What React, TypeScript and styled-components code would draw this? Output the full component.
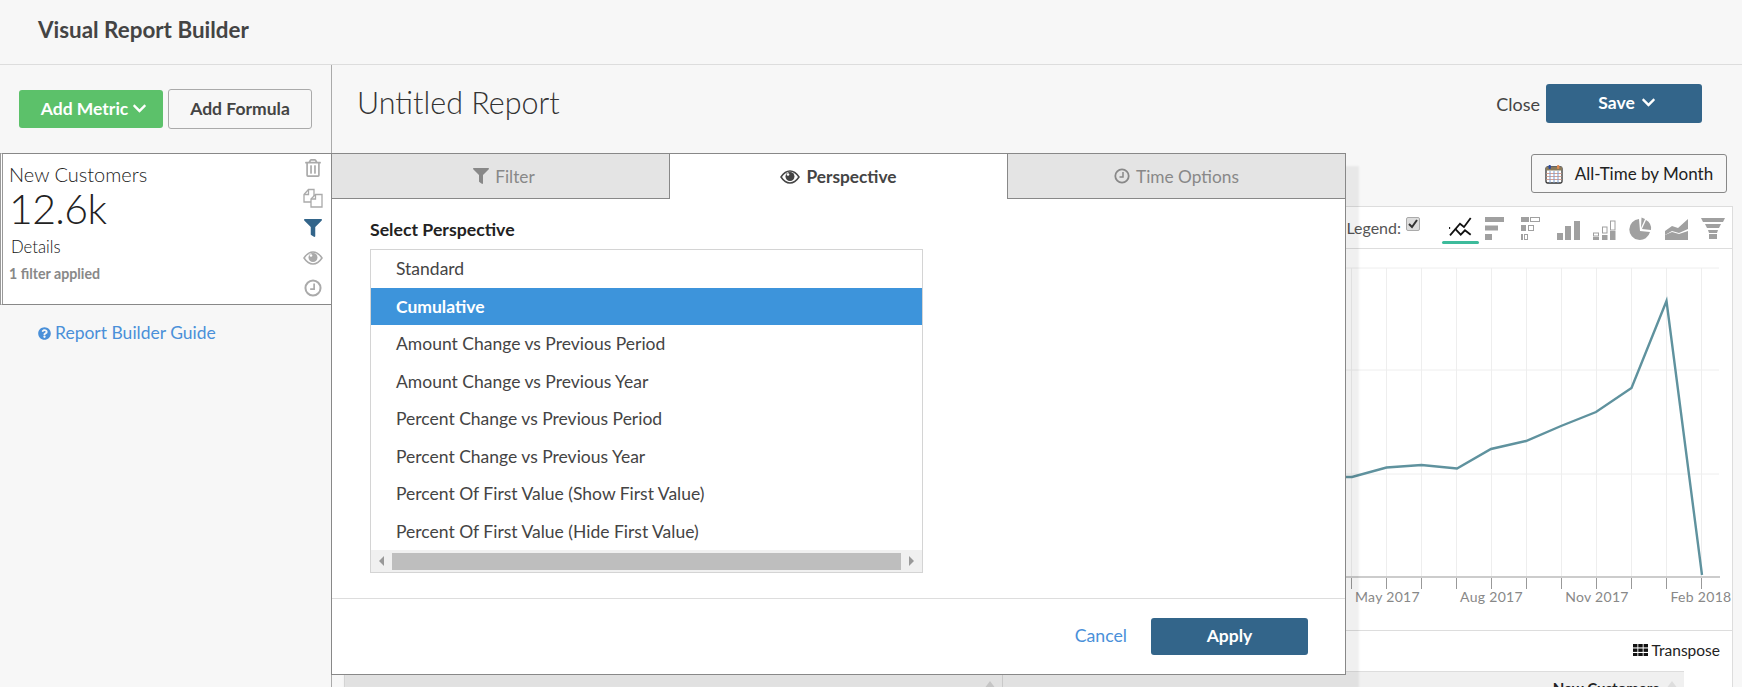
import React from 'react';
import styled, { createGlobalStyle } from 'styled-components';
import { FaChevronDown, FaFilter, FaQuestionCircle, FaRegTrashAlt } from 'react-icons/fa';

const GlobalStyle = createGlobalStyle`
  html, body {
    margin: 0;
    height: 100%;
    overflow: hidden;
    background: #f7f7f7;
    font-family: Lato, "Open Sans", sans-serif;
    color: #444;
  }
  * { box-sizing: border-box; }
`;

const Page = styled.div`
  position: relative;
  width: 1742px;
  height: 687px;
  overflow: hidden;
`;

const TopBar = styled.header`
  height: 65px;
  padding: 17px 0 0 38px;
  border-bottom: 1px solid #ddd;
  font-size: 22.4px;
  font-weight: 700;
  line-height: 26px;
  color: #444;
`;

const Body = styled.div`
  display: flex;
  height: 622px;
`;

const Sidebar = styled.aside`
  width: 332px;
  flex: none;
  border-right: 1px solid #aaa;
`;

const SidebarActions = styled.div`
  display: flex;
  gap: 5px;
  height: 88px;
  padding: 24px 0 0 19px;
  align-items: flex-start;
`;

const GreenButton = styled.button`
  width: 144px;
  height: 38px;
  margin-top: 1px;
  padding: 0 0 2px 6px;
  border: 0;
  border-radius: 3px;
  background: #5cc16a;
  color: #fff;
  font: 700 17.5px Lato, sans-serif;
  display: flex;
  align-items: center;
  justify-content: center;
  gap: 4px;
`;

const OutlineButton = styled.button`
  width: 144px;
  height: 40px;
  padding: 0 0 2px;
  border: 1px solid #aaa;
  border-radius: 3px;
  background: #f7f7f7;
  color: #444;
  font: 700 17.5px Lato, sans-serif;
`;

const MetricCard = styled.section`
  position: relative;
  display: flex;
  justify-content: space-between;
  height: 152px;
  background: #fff;
  border-top: 1px solid #888;
  border-bottom: 1px solid #888;
  border-left: 3px double #999;
`;

const MetricText = styled.div`
  padding: 8px 0 0 6px;
`;

const MetricName = styled.div`
  font-size: 20px;
  line-height: 24px;
  font-weight: 300;
  color: #222;
`;

const MetricValue = styled.div`
  font-size: 41px;
  line-height: 46px;
  font-weight: 300;
  letter-spacing: -0.6px;
  color: #222;
`;

const MetricDetails = styled.div`
  margin: 4px 0 0 2px;
  font-size: 16.7px;
  line-height: 22px;
  font-weight: 300;
  color: #111;
`;

const MetricFilters = styled.div`
  margin-top: 7px;
  font-size: 14.2px;
  line-height: 18px;
  font-weight: 700;
  color: #888;
`;

const MetricIcons = styled.div`
  display: flex;
  flex-direction: column;
  align-items: center;
  gap: 11px;
  width: 19px;
  margin: 4px 9px 0 0;
  color: #aaa;
`;

const MetricIcon = styled.span<{ $active?: boolean }>`
  display: flex;
  height: 19px;
  align-items: center;
  justify-content: center;
  font-size: 18px;
  color: ${props => (props.$active ? '#33658a' : '#aaa')};
`;

const GuideLink = styled.a`
  display: flex;
  align-items: center;
  gap: 4px;
  padding: 17px 0 0 38px;
  font-size: 17.5px;
  line-height: 22px;
  color: #4a90d9;
`;

const Main = styled.main`
  flex: 1;
  min-width: 0;
`;

const TitleRow = styled.div`
  display: flex;
  align-items: center;
  height: 39px;
  margin-top: 19px;
  padding: 0 40px 0 25px;
`;

const Title = styled.h1`
  flex: 1;
  margin: 0 0 3px;
  font-size: 30.5px;
  font-weight: 300;
  color: #333;
`;

const CloseLink = styled.a`
  margin-right: 6px;
  font-size: 18px;
  color: #444;
`;

const BlueButton = styled.button<{ $wide?: boolean }>`
  display: flex;
  align-items: center;
  justify-content: center;
  gap: 6px;
  width: ${props => (props.$wide ? '157px' : '156px')};
  height: ${props => (props.$wide ? '37px' : '39px')};
  padding: 0 0 2px ${props => (props.$wide ? '0' : '6px')};
  border: 0;
  border-radius: 3px;
  background: #33658a;
  color: #fff;
  font: 700 17.5px Lato, sans-serif;
`;

const ControlRow = styled.div`
  display: flex;
  justify-content: flex-end;
  margin-top: 31px;
  padding-right: 15px;
`;

const RangeButton = styled.button`
  display: flex;
  align-items: center;
  justify-content: center;
  gap: 12px;
  width: 196px;
  height: 39px;
  border: 1px solid #888;
  border-radius: 3px;
  background: #f7f7f7;
  color: #222;
  font: 400 17px Lato, sans-serif;
`;

const ChartCard = styled.section`
  width: 1389px;
  height: 500px;
  margin: 13px 0 0 12px;
  background: #fff;
  border: 1px solid #ddd;
  border-bottom: 0;
`;

const ChartToolbar = styled.div`
  display: flex;
  align-items: center;
  justify-content: flex-end;
  gap: 12px;
  height: 42px;
  padding-right: 7px;
  border-bottom: 1px solid #ddd;
`;

const LegendLabel = styled.label`
  display: flex;
  align-items: center;
  gap: 5px;
  margin: 0 17px 0 0;
  font-size: 16px;
  color: #555;
`;

const LegendBox = styled.span`
  display: flex;
  align-items: center;
  justify-content: center;
  width: 14px;
  height: 14px;
  margin-top: -7px;
  border: 1px solid #aaa;
  border-radius: 2px;
  background: #ddd;
`;

const ChartType = styled.span<{ $active?: boolean }>`
  position: relative;
  display: flex;
  align-self: flex-start;
  width: 24px;
  height: 26px;
  margin-top: 8px;

  ${props => props.$active && `
    &::after {
      content: '';
      position: absolute;
      left: -7px;
      right: -6px;
      bottom: -3px;
      height: 3px;
      border-radius: 2px;
      background: #3dbb9b;
    }
  `}
`;

const Plot = styled.svg`
  display: block;
  overflow: visible;
`;

const TableBar = styled.div`
  display: flex;
  align-items: center;
  justify-content: flex-end;
  gap: 4px;
  height: 41px;
  padding: 0 12px 2px 0;
  border-top: 1px solid #ddd;
  font-size: 15.5px;
  color: #222;
`;

const TableHead = styled.div`
  position: relative;
  display: flex;
  justify-content: flex-end;
  width: 1339px;
  height: 30px;
  background: #f0f0f0;
  border-top: 1px solid #ddd;
  padding: 7px 25px 0 0;
  font-size: 15px;
  font-weight: 700;
  color: #222;

  &::after {
    content: '';
    position: absolute;
    right: 6px;
    top: 9px;
    border-left: 6px solid transparent;
    border-right: 6px solid transparent;
    border-bottom: 8px solid #ddd;
  }
`;

const HeadDivider = styled.span`
  position: absolute;
  left: 657px;
  top: 0;
  bottom: 0;
  width: 1px;
  background: #d6d6d6;

  &::before {
    content: '';
    position: absolute;
    right: 7px;
    top: 9px;
    border-left: 6px solid transparent;
    border-right: 6px solid transparent;
    border-bottom: 8px solid #d2d2d2;
  }
`;

const Modal = styled.div`
  position: absolute;
  left: 331px;
  top: 153px;
  width: 1015px;
  height: 522px;
  background: #fff;
  border: 1px solid #888;
  box-shadow: 13px 13px 2px rgba(0, 0, 0, 0.06);
`;

const Tabs = styled.div`
  display: grid;
  grid-template-columns: 338px 338px 1fr;
  height: 45px;
`;

const Tab = styled.div<{ $active?: boolean; $last?: boolean; $shift?: number }>`
  display: flex;
  align-items: center;
  justify-content: center;
  gap: 6px;
  padding-left: ${props => props.$shift ?? 0}px;
  font-size: 17.3px;
  font-weight: ${props => (props.$active ? 700 : 400)};
  color: ${props => (props.$active ? '#444' : '#888')};
  background: ${props => (props.$active ? '#fff' : '#e4e4e4')};
  border-bottom: ${props => (props.$active ? '0' : '1px solid #888')};
  border-right: ${props => (props.$last ? '0' : '1px solid #888')};
`;

const ModalBody = styled.div`
  height: 400px;
  padding: 21px 0 0 38px;
  border-bottom: 1px solid #ddd;
`;

const FieldLabel = styled.div`
  font-size: 17.7px;
  line-height: 20px;
  font-weight: 700;
  color: #222;
`;

const PerspectiveList = styled.div`
  width: 553px;
  height: 324px;
  margin-top: 9px;
  border: 1px solid #d4d4d4;
`;

const PerspectiveRow = styled.div<{ $selected?: boolean }>`
  height: 37.5px;
  padding-left: 25px;
  font-size: 17.5px;
  line-height: 37px;
  font-weight: ${props => (props.$selected ? 700 : 400)};
  color: ${props => (props.$selected ? '#fff' : '#444')};
  background: ${props => (props.$selected ? '#3d94db' : 'transparent')};
`;

const ScrollTrack = styled.div`
  display: flex;
  align-items: center;
  height: 22px;
  background: #f0f0f0;
`;

const ScrollThumb = styled.div`
  flex: 1;
  height: 17px;
  background: #bebebe;
`;

const ScrollArrow = styled.span<{ $right?: boolean }>`
  width: 21px;
  display: flex;
  justify-content: center;

  &::before {
    content: '';
    border-top: 5px solid transparent;
    border-bottom: 5px solid transparent;
    border-right: ${props => (props.$right ? '0' : '5px solid #999')};
    border-left: ${props => (props.$right ? '5px solid #999' : '0')};
  }
`;

const ModalFooter = styled.div`
  display: flex;
  align-items: center;
  justify-content: flex-end;
  gap: 24px;
  height: 75px;
  padding: 0 37px 0 0;
`;

const CancelLink = styled.a`
  margin-bottom: 2px;
  font-size: 17.7px;
  color: #4a90d9;
`;

const Clock = ({ size, color }: { size: number; color: string }) => (
  <svg width={size} height={size} viewBox="0 0 16 16">
    <circle cx="8" cy="8" r="6.7" fill="none" stroke={color} strokeWidth="1.8" />
    <path d="M9 4v5H5.5" fill="none" stroke={color} strokeWidth="1.5" />
  </svg>
);

const Eye = ({ width, color }: { width: number; color: string }) => (
  <svg width={width} height={(width * 16) / 20} viewBox="0 0 20 16">
    <path d="M1 8C4 3.5 7 2 10 2s6 1.5 9 6c-3 4.5-6 6-9 6S4 12.5 1 8z" fill="none" stroke={color} strokeWidth="1.5" />
    <circle cx="10" cy="7.5" r="4.5" fill={color} />
    <circle cx="8" cy="5.5" r="1.3" fill="#fff" />
  </svg>
);

const CopyIcon = () => (
  <svg width="20" height="20" viewBox="0 0 20 20" fill="#fff" stroke="#aaa" strokeWidth="1.3">
    <path d="M1 6.5 5.5 1.5H11V14H1z" />
    <path d="M5.5 1.5v5H1" fill="none" />
    <path d="M8 11l4.5-4.5H19V19H8z" />
    <path d="M12.5 6.5V11H8" fill="none" />
  </svg>
);

const Calendar = () => (
  <svg width="18" height="20" viewBox="0 0 18 20">
    <rect x="1" y="3" width="16" height="16" rx="1.5" fill="#fff" stroke="#333" strokeWidth="1.3" />
    <rect x="1" y="3" width="16" height="3.5" fill="#8a7a5a" />
    <path d="M1.5 9.5h15M1.5 12.5h15M1.5 15.5h15" stroke="#d9a090" strokeWidth="1" />
    <path d="M5 7v12M9 7v12M13 7v12" stroke="#7a9ccc" strokeWidth="1" />
    <rect x="3.5" y="1" width="2.4" height="4" rx="1" fill="#2a4aa0" />
    <rect x="12" y="1" width="2.4" height="4" rx="1" fill="#e08a50" />
  </svg>
);

const GREY = '#a0a0a0';

const LineIcon = () => (
  <svg width="24" height="26" viewBox="0 0 24 26" fill="none" stroke="#111" strokeWidth="1.8">
    <path d="M1 20.3 11 8.7l4 3.3 6.700-9" />
    <path d="M6 13.700l5.700 6 4.300-4.400 5.700 4.400" />
    <circle cx="0.3" cy="13" r="1" fill="#111" stroke="none" />
  </svg>
);

const BarsIcon = () => (
  <svg width="24" height="26" viewBox="0 0 24 26" fill={GREY}>
    <rect x="0" y="2" width="19" height="5" />
    <rect x="0" y="10.5" width="13" height="5" />
    <rect x="0" y="19" width="7" height="6" />
  </svg>
);

const TreeIcon = () => (
  <svg width="24" height="26" viewBox="0 0 24 26" fill={GREY}>
    <rect x="0" y="2" width="8" height="5" />
    <rect x="9.5" y="2.5" width="9" height="4" fill="none" stroke={GREY} />
    <rect x="0" y="10" width="5" height="6" />
    <rect x="7.5" y="10.5" width="5" height="5" fill="none" stroke={GREY} />
    <rect x="0" y="19" width="2" height="6" />
    <rect x="3.5" y="19.5" width="3" height="5" fill="none" stroke={GREY} />
  </svg>
);

const ColumnsIcon = () => (
  <svg width="24" height="26" viewBox="0 0 24 26" fill={GREY}>
    <rect x="0" y="18" width="6" height="7" />
    <rect x="8" y="11" width="6" height="14" />
    <rect x="17" y="6" width="6" height="19" />
  </svg>
);

const StackedIcon = () => (
  <svg width="24" height="26" viewBox="0 0 24 26" fill={GREY}>
    <rect x="0.5" y="18" width="5" height="3" fill="none" stroke={GREY} />
    <rect x="0" y="22" width="6" height="3" />
    <rect x="9.5" y="12" width="4.5" height="6" fill="none" stroke={GREY} />
    <rect x="9" y="20" width="5.5" height="5" />
    <rect x="17.5" y="6" width="4.5" height="9" fill="none" stroke={GREY} />
    <rect x="17" y="16" width="5.5" height="9" />
  </svg>
);

const PieIcon = () => (
  <svg width="24" height="26" viewBox="0 0 24 26" fill={GREY}>
    <g transform="translate(0 1)">
      <path d="M10 3A10.5 10.5 0 1 0 21 16l-10-1z" />
      <path d="M12.5 1.5 16 3 12 12z" />
      <path d="M17 4a10 10 0 0 1 5 10l-9-1z" />
    </g>
  </svg>
);

const AreaIcon = () => (
  <svg width="24" height="26" viewBox="0 0 24 26" fill={GREY}>
    <path d="M0 16 7 11l6 2 10-9v10l-9 4-7-2-7 4z" />
    <path d="M0 20l7-3 7 2 9-3v9H0z" />
  </svg>
);

const FunnelIcon = () => (
  <svg width="24" height="26" viewBox="0 0 24 26" fill={GREY}>
    <path d="M0 3h24l-2 4H2z" />
    <path d="M4 9h16l-2 4H6z" />
    <path d="M7 15h10l-1 3H8z" />
    <rect x="8" y="19" width="8" height="5" />
  </svg>
);

const TransposeIcon = () => (
  <svg width="15" height="12" viewBox="0 0 15 12" fill="#111">
    {[0, 4.5, 9].map(y =>
      [0, 5.3, 10.6].map(x => <rect key={`${x}-${y}`} x={x} y={y} width="4.4" height="3.4" />)
    )}
  </svg>
);

const gridX = [1351.5, 1386.5, 1421.5, 1456.5, 1491.5, 1526.5, 1561.5, 1596.5, 1631.5, 1666.5, 1701.5];
const gridY = [268, 370, 474];
const seriesPoints =
  '345,477 1352,477 1386.5,467.5 1421.5,465 1457,468.5 1491,449 1526,441 1561,426 1596,412 1631.5,388 1666.5,301 1702,575';
const xLabels = [
  { x: 1387.5, text: 'May 2017' },
  { x: 1491.5, text: 'Aug 2017' },
  { x: 1597, text: 'Nov 2017' },
  { x: 1701, text: 'Feb 2018' },
];

const ChartPlot = () => (
  <Plot width="1387" height="381" viewBox="345 249 1387 381">
    {gridY.map(y => (
      <line key={y} x1="345" x2="1719" y1={y} y2={y} stroke="#eee" />
    ))}
    {gridX.map(x => (
      <line key={x} x1={x} x2={x} y1="268" y2="577" stroke="#eee" />
    ))}
    {gridX.map(x => (
      <line key={x} x1={x} x2={x} y1="577" y2="589" stroke="#999" />
    ))}
    <line x1="345" x2="1720" y1="577" y2="577" stroke="#ccc" strokeWidth="2" />
    <polyline points={seriesPoints} fill="none" stroke="#5f929e" strokeWidth="2.4" />
    {xLabels.map(l => (
      <text key={l.text} x={l.x} y="602" textAnchor="middle" fontSize="14" letterSpacing="0.3" fill="#888">
        {l.text}
      </text>
    ))}
  </Plot>
);

const perspectives = [
  'Standard',
  'Cumulative',
  'Amount Change vs Previous Period',
  'Amount Change vs Previous Year',
  'Percent Change vs Previous Period',
  'Percent Change vs Previous Year',
  'Percent Of First Value (Show First Value)',
  'Percent Of First Value (Hide First Value)',
];

const App: React.FC = () => (
  <Page>
    <GlobalStyle />
    <TopBar>Visual Report Builder</TopBar>
    <Body>
      <Sidebar>
        <SidebarActions>
          <GreenButton>
            Add Metric <FaChevronDown size={15} />
          </GreenButton>
          <OutlineButton>Add Formula</OutlineButton>
        </SidebarActions>
        <MetricCard>
          <MetricText>
            <MetricName>New Customers</MetricName>
            <MetricValue>12.6k</MetricValue>
            <MetricDetails>Details</MetricDetails>
            <MetricFilters>1 filter applied</MetricFilters>
          </MetricText>
          <MetricIcons>
            <MetricIcon><FaRegTrashAlt /></MetricIcon>
            <MetricIcon><CopyIcon /></MetricIcon>
            <MetricIcon $active><FaFilter /></MetricIcon>
            <MetricIcon><Eye width={20} color="#aaa" /></MetricIcon>
            <MetricIcon><Clock size={18} color="#aaa" /></MetricIcon>
          </MetricIcons>
        </MetricCard>
        <GuideLink>
          <FaQuestionCircle size={13} /> Report Builder Guide
        </GuideLink>
      </Sidebar>
      <Main>
        <TitleRow>
          <Title>Untitled Report</Title>
          <CloseLink>Close</CloseLink>
          <BlueButton>
            Save <FaChevronDown size={15} />
          </BlueButton>
        </TitleRow>
        <ControlRow>
          <RangeButton>
            <Calendar /> All-Time by Month
          </RangeButton>
        </ControlRow>
        <ChartCard>
          <ChartToolbar>
            <LegendLabel>
              Legend:
              <LegendBox>
                <svg width="10" height="10" viewBox="0 0 10 10">
                  <path d="M1 5l3 3 5-7" fill="none" stroke="#333" strokeWidth="2" />
                </svg>
              </LegendBox>
            </LegendLabel>
            <ChartType $active><LineIcon /></ChartType>
            <ChartType><BarsIcon /></ChartType>
            <ChartType><TreeIcon /></ChartType>
            <ChartType><ColumnsIcon /></ChartType>
            <ChartType><StackedIcon /></ChartType>
            <ChartType><PieIcon /></ChartType>
            <ChartType><AreaIcon /></ChartType>
            <ChartType><FunnelIcon /></ChartType>
          </ChartToolbar>
          <ChartPlot />
          <TableBar>
            <TransposeIcon /> Transpose
          </TableBar>
          <TableHead>
            <HeadDivider />
            New Customers
          </TableHead>
        </ChartCard>
      </Main>
    </Body>
    <Modal>
      <Tabs>
        <Tab $shift={7}><FaFilter size={16} /> Filter</Tab>
        <Tab $active><Eye width={20} color="#444" /> Perspective</Tab>
        <Tab $last><Clock size={16} color="#888" /> Time Options</Tab>
      </Tabs>
      <ModalBody>
        <FieldLabel>Select Perspective</FieldLabel>
        <PerspectiveList>
          {perspectives.map(p => (
            <PerspectiveRow key={p} $selected={p === 'Cumulative'}>
              {p}
            </PerspectiveRow>
          ))}
          <ScrollTrack>
            <ScrollArrow />
            <ScrollThumb />
            <ScrollArrow $right />
          </ScrollTrack>
        </PerspectiveList>
      </ModalBody>
      <ModalFooter>
        <CancelLink>Cancel</CancelLink>
        <BlueButton $wide>Apply</BlueButton>
      </ModalFooter>
    </Modal>
  </Page>
);

export default App;
